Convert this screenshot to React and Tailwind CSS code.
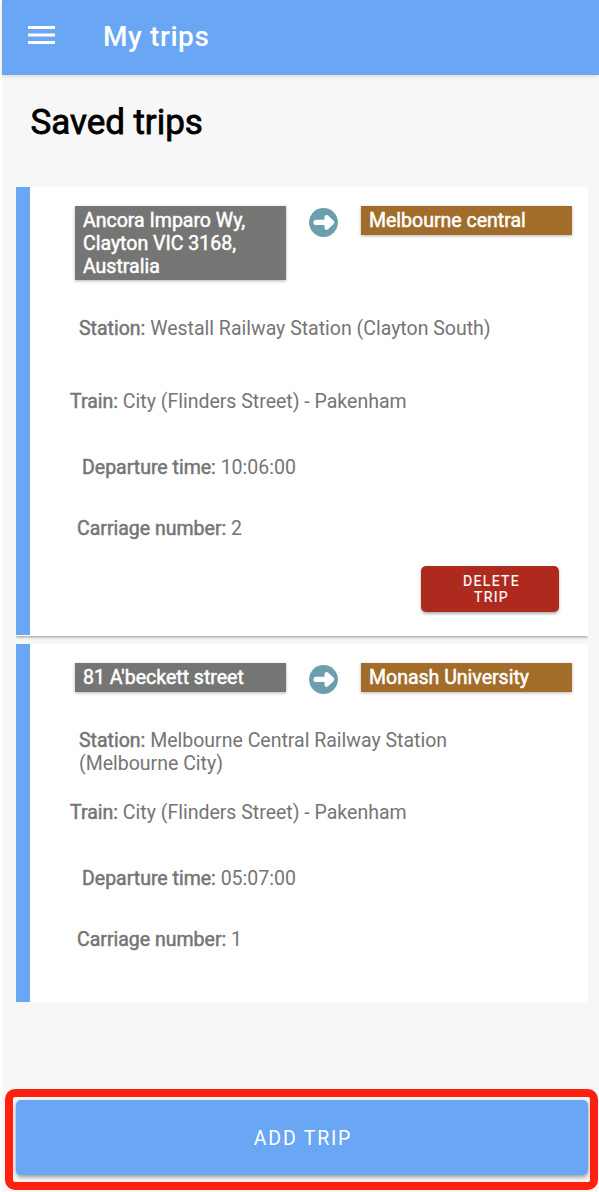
import React from "react";

const trips = [
  {
    from: ["Ancora Imparo Wy,", "Clayton VIC 3168,", "Australia"],
    to: "Melbourne central",
    station: ["Westall Railway Station (Clayton South)"],
    train: "City (Flinders Street) - Pakenham",
    time: "10:06:00",
    carriage: "2",
    canDelete: true,
  },
  {
    from: ["81 A'beckett street"],
    to: "Monash University",
    station: ["Melbourne Central Railway Station", "(Melbourne City)"],
    train: "City (Flinders Street) - Pakenham",
    time: "05:07:00",
    carriage: "1",
    canDelete: false,
  },
];

const heavy = "[-webkit-text-stroke:0.5px_currentColor]";

function Lines({ items }) {
  return items.map((t, i) => (
    <React.Fragment key={t}>
      {i > 0 && <br />}
      {t}
    </React.Fragment>
  ));
}

function ArrowBadge() {
  return (
    <svg className="ml-[23px] mt-[2px] h-[29px] w-[29px] shrink-0" viewBox="0 0 29 29">
      <circle cx="14.5" cy="14.5" r="14.4" fill="#6b9fad" />
      <path d="M7.2 14.4H17.5" stroke="#fff" strokeWidth="5.4" strokeLinecap="round" />
      <path
        d="M17.6 9.1L23.2 14.4L17.6 19.7Z"
        fill="#fff"
        stroke="#fff"
        strokeWidth="4.2"
        strokeLinejoin="round"
      />
    </svg>
  );
}

function Place({ className, children }) {
  return (
    <div
      className={
        "w-[211px] whitespace-nowrap pb-[2px] pl-[8px] pt-[4px] text-white shadow-[0_1px_3px_rgba(0,0,0,0.3)] " +
        heavy +
        " " +
        className
      }
    >
      {children}
    </div>
  );
}

function Field({ label, children, className }) {
  return (
    <p className={"whitespace-nowrap text-[#757575] " + className}>
      <span className={heavy}>{label}:</span> {children}
    </p>
  );
}

function TripCard({ trip }) {
  const first = trip.canDelete;
  return (
    <article
      className={
        "flex bg-white " +
        (first
          ? "h-[449px] shadow-[0_1px_3px_rgba(0,0,0,0.4)] [clip-path:inset(0_0_-6px_0)]"
          : "h-[358px]")
      }
    >
      <div className={"w-[14px] shrink-0 bg-[#69a6f3] " + (first ? "h-[448px]" : "h-full")} />
      <div className="flex grow flex-col pl-[40px] pt-[19px]">
        <div className={"flex items-start pl-[5px] " + (first ? "h-[111px]" : "h-[65.5px]")}>
          <Place className="bg-[#757573]">
            <Lines items={trip.from} />
          </Place>
          <ArrowBadge />
          <Place className="ml-[23px] bg-[#a26c2a]">{trip.to}</Place>
        </div>
        <Field
          label="Station"
          className={"pl-[9px] leading-[23px] " + (first ? "h-[74px]" : "h-[73.5px]")}
        >
          <Lines items={trip.station} />
        </Field>
        <Field label="Train" className="h-[66px]">{trip.train}</Field>
        <Field label="Departure time" className="h-[60.5px] pl-[12px]">{trip.time}</Field>
        <Field label="Carriage number" className="h-[48.5px] pl-[7px]">{trip.carriage}</Field>
        {first && (
          <button className="mr-[29px] h-[46px] w-[138px] self-end rounded-[5px] bg-[#af2a1e] pl-[3px] text-center text-[14px] leading-[16px] tracking-[1.3px] text-white shadow-[0_2px_3px_rgba(0,0,0,0.3)] [-webkit-text-stroke:0.15px_currentColor]">
            DELETE
            <br />
            TRIP
          </button>
        )}
      </div>
    </article>
  );
}

export default function App() {
  return (
    <div className="h-[1192px] w-[599px] overflow-hidden bg-white pl-[2px] font-['Roboto',sans-serif] text-[19.5px] leading-[22.8px]">
      <div className="flex h-full flex-col bg-[#f7f7f7]">
        <header className="flex h-[75px] shrink-0 items-center bg-[#69a6f3] pl-[26px] shadow-[0_1px_4px_rgba(0,0,0,0.15)]">
          <svg className="mb-[5px] h-[18px] w-[27px]" viewBox="0 0 27 18">
            <path d="M0 1.5H27M0 9H27M0 16.5H27" stroke="#fff" strokeWidth="2.8" />
          </svg>
          <span className="mb-[2px] ml-[48px] whitespace-nowrap text-[28px] font-medium leading-[34px] tracking-[0.6px] text-white">
            My trips
          </span>
        </header>
        <h1 className="h-[112px] shrink-0 whitespace-nowrap pl-[28.5px] pt-[27px] text-[35px] leading-[42px] tracking-[-0.05px] text-black [-webkit-text-stroke:0.8px_currentColor]">
          Saved trips
        </h1>
        <main className="ml-[14px] flex w-[572px] flex-col gap-[8px]">
          {trips.map((trip) => (
            <TripCard key={trip.to} trip={trip} />
          ))}
        </main>
        <div className="ml-[3px] mt-[87px] h-[101px] w-[593px] shrink-0 rounded-[10px] border-[8px] border-[#ff2010] pl-[3px] pr-[2px] pt-[3px]">
          <button className="h-[75px] w-full rounded-[5px] bg-[#69a6f3] pl-[2px] pt-[3px] text-center text-[19.5px] tracking-[1.8px] text-white shadow-[0_2px_4px_rgba(0,0,0,0.4)]">
            ADD TRIP
          </button>
        </div>
      </div>
    </div>
  );
}
